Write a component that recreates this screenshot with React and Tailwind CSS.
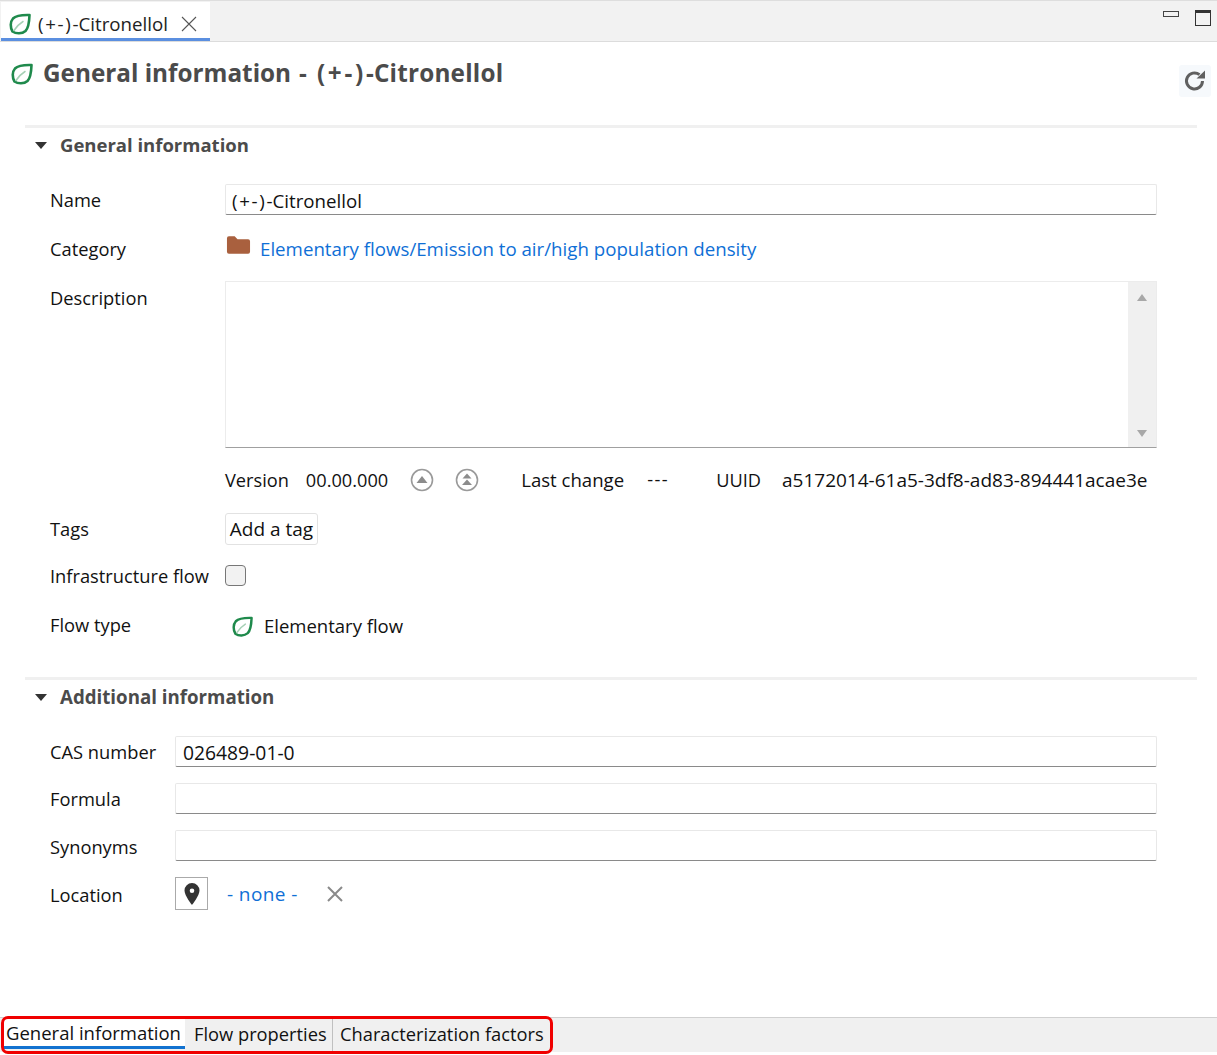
const font = { fontFamily: '"Open Sans", "Noto Sans", sans-serif' };

function Leaf({ className }) {
  return (
    <svg viewBox="0 0 22 22" fill="none" className={className}>
      <path d="M20.500 2C14 1.800 7 2.500 4 5.500C1 9 1.200 14.500 3.500 18.500C7 21 13 21 16.500 18C20 14.500 20.300 8 20.500 2Z" stroke="#1f8a4c" strokeWidth="2.600" strokeLinejoin="round" />
      <path d="M5 17.500C7.500 13.500 10 11 14 8.500" stroke="#a6d0b5" strokeWidth="1.500" strokeLinecap="round" />
    </svg>
  );
}

function Caret() {
  return <span className="h-0 w-0 border-x-[6.500px] border-t-[7px] border-x-transparent border-t-[#333]" />;
}

function SectionHeader({ title, size = 'text-[18.500px]' }) {
  return (
    <div className="ml-[25px] mr-[20px] h-[40px] border-t-[3px] border-[#f0f0f0]">
      <div className="flex h-[34px] items-center gap-[13px] pl-[10px]">
        <Caret />
        <span className={`${size} font-bold text-[#4b4b4b]`}>{title}</span>
      </div>
    </div>
  );
}

function Input({ children, className }) {
  return (
    <div className={`flex h-[31px] items-center rounded-[2px] border border-[#e8e8e8] border-b-[#8a8a8a] bg-white pl-[6px] pt-[3px] text-[18.700px] text-[#111] ${className}`}>
      {children}
    </div>
  );
}

function Row({ label, labelWidth = 'w-[175px]', labelClass = 'pt-[2px]', children, className }) {
  return (
    <div className={`flex items-center pl-[50px] pr-[60px] ${className}`}>
      <span className={`${labelWidth} ${labelClass} shrink-0 text-[18.300px] text-[#111]`}>{label}</span>
      {children}
    </div>
  );
}

function CircleUp({ double }) {
  return (
    <svg viewBox="0 0 24 24" className="h-[24px] w-[24px]" fill="none">
      <circle cx="12" cy="12" r="10.500" stroke="#9a9a9a" strokeWidth="1.600" />
      {double ? (
        <>
          <path d="M12 5.500L16.500 10.500H7.500Z" fill="#8c8c8c" />
          <path d="M12 11.500L17 17H7Z" fill="#8c8c8c" />
        </>
      ) : (
        <path d="M12 8L17.500 15H6.500Z" fill="#8c8c8c" />
      )}
    </svg>
  );
}

export default function App() {
  return (
    <div style={font} className="relative flex h-[1055px] w-[1217px] flex-col overflow-hidden bg-white">
      <div className="flex h-[42px] shrink-0 items-end justify-between border-y border-t-[#dedede] border-b-[#dcdcdc] bg-[#f2f2f2]">
        <div className="ml-[1px] flex h-[39px] w-[209px] items-center border-b-[3px] border-[#5b8fe0] bg-white pl-[8px] pt-[8px]">
          <Leaf className="h-[22px] w-[22px]" />
          <span className="ml-[7px] text-[18.700px] text-[#222]"><span className="tracking-[1.700px]">(+-)</span>-Citronellol</span>
          <svg viewBox="0 0 16 16" className="ml-[13px] h-[16px] w-[16px]" stroke="#555" strokeWidth="1.100">
            <path d="M1 1L15 15M15 1L1 15" />
          </svg>
        </div>
        <div className="mb-[15px] flex items-start gap-[16px] pr-[6px]">
          <div className="mt-[1px] h-[6px] w-[16px] border border-[#444] bg-[#f2f2f2]" />
          <div className="h-[16px] w-[16px] border border-[#333] border-t-[3px] bg-[#f2f2f2]" />
        </div>
      </div>

      <div className="flex h-[83px] shrink-0 justify-between pr-[6px]">
        <div className="flex h-[62px] items-center pl-[11px]">
          <Leaf className="mt-[2px] h-[22px] w-[22px]" />
          <span className="ml-[10px] text-[24.300px] font-bold text-[#4b4b4b]">
            General information<span className="ml-[8px]">-</span>
            <span className="ml-[10px] tracking-[0.200px]"><span className="tracking-[2.700px]">(+-)</span>-Citronellol</span>
          </span>
        </div>
        <div className="mt-[23px] flex h-[32px] w-[32px] items-center justify-center rounded-[3px] bg-[#f6f9fc]">
          <svg viewBox="0 0 24 24" className="h-[24px] w-[24px]" fill="none">
            <path d="M19.500 12A8 8 0 1 1 16.500 5.700" stroke="#606060" strokeWidth="3" />
            <path d="M13.500 9.500H22V1.500Z" fill="#606060" />
          </svg>
        </div>
      </div>

      <SectionHeader title="General information" />

      <Row label="Name" labelClass="pt-[0px]" className="mt-[19px]">
        <Input className="flex-1"><span className="tracking-[1.700px]">(+-)</span>-Citronellol</Input>
      </Row>

      <Row label="Category" labelClass="pt-[0px]" className="mt-[18px] h-[31px]">
        <svg viewBox="0 0 26 20" className="-mt-[8px] ml-[1px] h-[20px] w-[25px]">
          <path d="M1 3a2 2 0 0 1 2-2h6l3 3h11a2 2 0 0 1 2 2v11a2 2 0 0 1-2 2H3a2 2 0 0 1-2-2Z" fill="#a9603e" />
        </svg>
        <a className="ml-[9px] pt-[2px] text-[18.700px] text-[#0f6fd6]">Elementary flows/Emission to air/high population density</a>
      </Row>

      <Row label="Description" labelClass="pt-[3px]" className="mt-[17px] !items-start">
        <div className="flex h-[167px] flex-1 justify-end border border-[#ececec] border-b-[#a0a0a0] bg-white">
          <div className="flex w-[28px] flex-col items-center justify-between bg-[#f0f0f0] pb-[10px] pt-[12px]">
            <span className="h-0 w-0 border-x-[5px] border-b-[7px] border-x-transparent border-b-[#a8a8a8]" />
            <span className="h-0 w-0 border-x-[5px] border-t-[7px] border-x-transparent border-t-[#a8a8a8]" />
          </div>
        </div>
      </Row>

      <div className="ml-[225px] mt-[16px] flex h-[32px] items-center text-[18.200px] text-[#111]">
        <span className="pt-[2px]">Version</span>
        <span className="ml-[17px] pt-[2px]">00.00.000</span>
        <span className="ml-[22px]"><CircleUp /></span>
        <span className="ml-[21px]"><CircleUp double /></span>
        <span className="ml-[42px] text-[18.600px]">Last change</span>
        <span className="ml-[23px] tracking-[1.500px]">---</span>
        <span className="ml-[47px] pt-[2px]">UUID</span>
        <span className="ml-[21px] text-[19px]">a5172014-61a5-3df8-ad83-894441acae3e</span>
      </div>

      <Row label="Tags" labelClass="" className="mt-[17px]">
        <button className="flex h-[32px] w-[93px] items-center justify-center rounded-[3px] border border-[#e2e2e2] text-[19px] text-[#111]">Add a tag</button>
      </Row>

      <Row label="Infrastructure flow" labelClass="" className="mt-[15px] h-[32px]">
        <span className="-mt-[2px] h-[21px] w-[21px] rounded-[4px] border-[1.500px] border-[#777] bg-[#f2f2f2]" />
      </Row>

      <Row label="Flow type" labelClass="-mt-[2px]" className="mt-[18px] h-[32px]">
        <Leaf className="ml-[7px] h-[21px] w-[21px]" />
        <span className="ml-[11px] text-[18.500px] text-[#111]">Elementary flow</span>
      </Row>

      <div className="mt-[35px]">
        <SectionHeader title="Additional information" size="text-[18.700px]" />
      </div>

      <Row label="CAS number" labelWidth="w-[125px]" labelClass="pt-[0px]" className="mt-[19px]">
        <Input className="flex-1 pl-[7px] !text-[19.300px]">026489-01-0</Input>
      </Row>
      <Row label="Formula" labelWidth="w-[125px]" labelClass="pt-[0px]" className="mt-[16px]">
        <Input className="flex-1" />
      </Row>
      <Row label="Synonyms" labelWidth="w-[125px]" className="mt-[16px]">
        <Input className="flex-1" />
      </Row>
      <Row label="Location" labelWidth="w-[125px]" className="mt-[16px]">
        <div className="flex h-[33px] w-[33px] items-center justify-center border border-[#aaa]">
          <svg viewBox="0 0 18 24" className="h-[24px] w-[18px]">
            <path fillRule="evenodd" d="M9 1a7.500 7.500 0 0 0-7.500 7.500C1.500 13.500 9 23 9 23s7.500-9.500 7.500-14.500A7.500 7.500 0 0 0 9 1Zm0 5.500a2.300 2.300 0 1 1 0 4.600a2.300 2.300 0 0 1 0-4.600Z" fill="#333" />
          </svg>
        </div>
        <a className="ml-[19px] pt-[2px] text-[19px] tracking-[0.400px] text-[#0f6fd6]">- none -</a>
        <svg viewBox="0 0 16 16" className="ml-[29px] h-[16px] w-[16px]" stroke="#8a8a8a" strokeWidth="2">
          <path d="M1 1L15 15M15 1L1 15" />
        </svg>
      </Row>

      <div className="mb-[3px] mt-auto flex h-[35px] shrink-0 items-start border-t border-[#d0d0d0] bg-[#f0f0f0] text-[18.300px] text-[#111]">
        <div className="ml-[3px] flex h-[31px] w-[182px] items-center border-b-[3px] border-[#1272d0] bg-white pl-[3px] pt-[2px] text-[18.500px]">General information</div>
        <div className="flex h-[34px] w-[148px] items-center border-r border-[#c0c0c0] pb-[4px] pl-[9px] pt-[1px]">Flow properties</div>
        <div className="flex h-[34px] w-[218px] items-center border-r border-[#c0c0c0] pb-[4px] pl-[7px] pt-[1px]">Characterization factors</div>
      </div>
      <div className="absolute left-[1px] top-[1016px] h-[38px] w-[552px] rounded-[7px] border-[3px] border-[#f00000]" />
    </div>
  );
}
